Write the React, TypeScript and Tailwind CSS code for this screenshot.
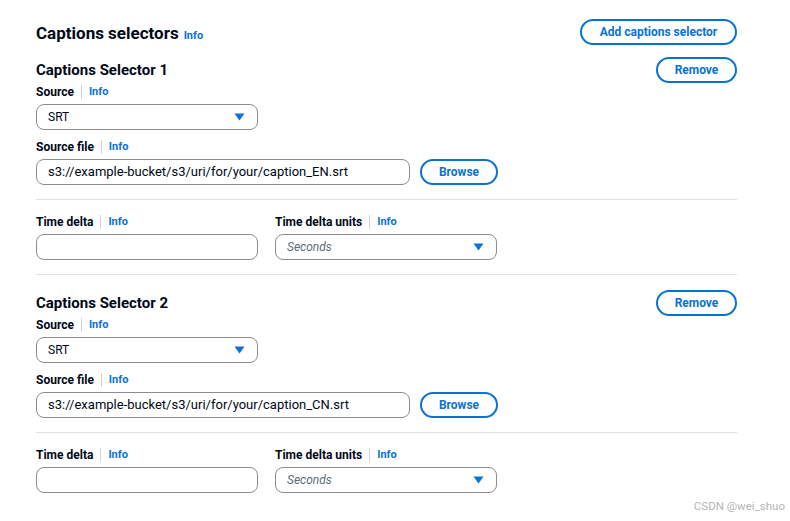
import React from 'react';

const font = { fontFamily: 'Roboto, "Open Sans", Arial, sans-serif' };

function Info() {
  return <span className="text-[11px] font-bold text-[#0972d3]">Info</span>;
}

function Label({ text }: { text: string }) {
  return (
    <div className="flex h-[18px] items-center">
      <span className="text-[12px] font-bold text-[#000716]">{text}</span>
      <span className="mx-[7px] h-[14px] w-px bg-[#d1d5db]" />
      <Info />
    </div>
  );
}

function Caret() {
  return (
    <svg width="11" height="8" viewBox="0 0 11 8" className="shrink-0">
      <path d="M0.5 0.5 H10.5 L5.5 7.5 Z" fill="#0972d3" />
    </svg>
  );
}

function Select({ value, placeholder }: { value: string; placeholder?: boolean }) {
  return (
    <div className="flex h-[26px] w-[222px] items-center justify-between rounded-[8px] border border-[#8c8c94] bg-white pl-[11px] pr-[12px]">
      <span
        className={
          placeholder
            ? 'text-[12px] italic text-[#5f6b7a]'
            : 'text-[12px] text-[#000716]'
        }
      >
        {value}
      </span>
      <Caret />
    </div>
  );
}

function TextInput({ value, width }: { value?: string; width: string }) {
  return (
    <div
      className={`flex h-[26px] ${width} items-center rounded-[8px] border border-[#8c8c94] bg-white pl-[11px]`}
    >
      <span className="text-[13px] text-[#000716]">{value}</span>
    </div>
  );
}

function PillButton({ children, className }: { children: React.ReactNode; className?: string }) {
  return (
    <button
      className={`flex h-[26px] items-center justify-center rounded-full border-2 border-[#0972d3] bg-white text-[12px] font-bold text-[#0972d3] ${className ?? ''}`}
    >
      {children}
    </button>
  );
}

function Divider() {
  return <div className="h-px w-full bg-[#dcdfe3]" />;
}

function SelectorBlock({ index, file }: { index: number; file: string }) {
  return (
    <div className="flex flex-col">
      <div className="flex h-[26px] items-center justify-between">
        <h3 className="text-[15px] font-bold text-[#000716]">Captions Selector {index}</h3>
        <PillButton className="w-[81px]">Remove</PillButton>
      </div>
      <Label text="Source" />
      <div className="mt-[3px]">
        <Select value="SRT" />
      </div>
      <div className="mt-[8px]">
        <Label text="Source file" />
      </div>
      <div className="mt-[3px] flex items-center gap-[10px]">
        <TextInput value={file} width="w-[374px]" />
        <PillButton className="w-[78px]">Browse</PillButton>
      </div>
      <div className="mt-[14px]">
        <Divider />
      </div>
      <div className="mt-[13px] flex gap-[17px]">
        <div className="flex flex-col">
          <Label text="Time delta" />
          <div className="mt-[3px]">
            <TextInput width="w-[222px]" />
          </div>
        </div>
        <div className="flex flex-col">
          <Label text="Time delta units" />
          <div className="mt-[3px]">
            <Select value="Seconds" placeholder />
          </div>
        </div>
      </div>
    </div>
  );
}

export default function App() {
  return (
    <div className="relative h-[521px] w-[790px] bg-white" style={font}>
      <div className="ml-[36px] w-[701px] pt-[19px]">
        <div className="flex h-[26px] items-center justify-between">
          <div className="flex items-baseline gap-[5px] pt-[3px]">
            <h2 className="text-[17px] font-bold text-[#000716]">Captions selectors</h2>
            <Info />
          </div>
          <PillButton className="w-[157px]">Add captions selector</PillButton>
        </div>
        <div className="mt-[12px]">
          <SelectorBlock index={1} file="s3://example-bucket/s3/uri/for/your/caption_EN.srt" />
        </div>
        <div className="mt-[14px]">
          <Divider />
        </div>
        <div className="mt-[15px]">
          <SelectorBlock index={2} file="s3://example-bucket/s3/uri/for/your/caption_CN.srt" />
        </div>
      </div>
      <div className="absolute bottom-[6px] right-[5px] text-[11.5px] text-[#b5b5b5]">
        CSDN @wei_shuo
      </div>
    </div>
  );
}
